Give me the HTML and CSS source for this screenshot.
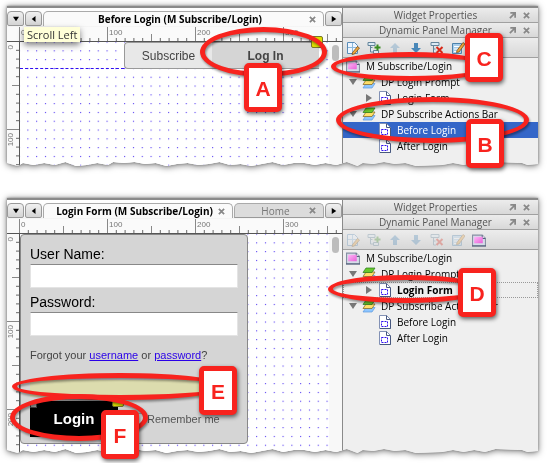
FILE: index.html
```html
<!DOCTYPE html>
<html lang="en">
<head>
    <meta charset="UTF-8">
    <meta name="viewport" content="width=device-width, initial-scale=1.0">
    <title>Dynamic Panel Manager</title>
    <link rel="stylesheet" href="styles.css">
</head>
<body>
    <!-- shared icons and patterns -->
    <svg class="defs" width="0" height="0" aria-hidden="true">
        <defs>
            <pattern id="dots" x="3.4" y="4.4" width="8.8" height="8.8" patternUnits="userSpaceOnUse">
                <rect x="4" y="4" width="1" height="1" fill="#3010f0"/>
            </pattern>
            <pattern id="ticks-x" x="12" y="0" width="88" height="14" patternUnits="userSpaceOnUse">
                <path d="M.5 0v14M44.5 7v7" stroke="#888"/>
                <path d="M9.3 11v3M18.1 11v3M26.9 11v3M35.7 11v3M53.3 11v3M62.1 11v3M70.9 11v3M79.7 11v3" stroke="#666"/>
            </pattern>
            <pattern id="ticks-y" x="0" y="-1" width="12" height="88" patternUnits="userSpaceOnUse">
                <path d="M0 .5h12M5 44.5h7" stroke="#888"/>
                <path d="M9 9.3h3M9 18.1h3M9 26.9h3M9 35.7h3M9 53.3h3M9 62.1h3M9 70.9h3M9 79.7h3" stroke="#666"/>
            </pattern>
            <linearGradient id="pink" x1="0" y1="0" x2="1" y2="1">
                <stop offset="0" stop-color="#ffb8f8"/>
                <stop offset="1" stop-color="#e860d8"/>
            </linearGradient>
            <symbol id="master" viewBox="0 0 13 12">
                <path d="M.5 1.5h9l3 3v7H.5z" fill="#d4dce8" stroke="#8790a4"/>
                <path d="M9.5 1.5v3h3" fill="#fff" stroke="#53617c"/>
                <rect x="2" y="3" width="8" height="6" fill="url(#pink)"/>
                <path d="M0 11.5h13" stroke="#4c5974"/>
            </symbol>
            <symbol id="layers" viewBox="0 0 14 14">
                <path d="M4 8.5h9l-3 4.500H1z" fill="#8ec6ff" stroke="#5c98dc" stroke-width=".7"/>
                <path d="M4 5h9l-3 4.500H1z" fill="#ffe06a" stroke="#806018" stroke-width=".7"/>
                <path d="M4 1h9l-3 4.500H1z" fill="#68c82c" stroke="#28781c" stroke-width=".7"/>
            </symbol>
            <symbol id="state" viewBox="0 0 12 14">
                <path d="M.5.5h7l4 4v9H.5z" fill="#fff" stroke="#8291b5"/>
                <path d="M7.500.5v4h4M11.500 5v8.500H1" fill="none" stroke="#47587f"/>
                <rect x="2.500" y="6.500" width="6" height="5" fill="none" stroke="#3010f0" stroke-dasharray="2 1"/>
            </symbol>
            <symbol id="page-edit" viewBox="0 0 14 14">
                <path d="M1.500 1.500h7l3 3v8h-10z" fill="#eef6ff" stroke="#5a8cb8"/>
                <path d="M2 6.500h9M6.500 2v10" stroke="#8cb8dc"/>
                <path d="M6.500 11.500l5-6 2 1.500-5 6-2.500.5z" fill="#eda63c" stroke="#704410" stroke-width=".7"/>
            </symbol>
            <symbol id="tree-add" viewBox="0 0 14 14">
                <path d="M1 1.500h7v3H1zM3.500 5v6H7M3.500 6.500h2" fill="#dcebf5" stroke="#63849b"/>
                <path d="M6.500 9.500h5v3h-5z" fill="#dcebf5" stroke="#63849b"/>
                <path d="M10.500 3.500v6M7.500 6.500h6" stroke="#388c20" stroke-width="2"/>
            </symbol>
            <symbol id="arrow-down" viewBox="0 0 12 14">
                <path d="M4 2h4v5h3L6 12 1 7h3z" fill="#4887b8"/>
            </symbol>
            <symbol id="arrow-up" viewBox="0 0 12 14">
                <path d="M4 12h4V7h3L6 2 1 7h3z" fill="#4887b8"/>
            </symbol>
            <symbol id="tree-delete" viewBox="0 0 14 14">
                <path d="M1 1.500h8v3H1zM3.500 5v7H6M3.500 8h2" fill="#dcebf5" stroke="#63849b"/>
                <path d="M6.500 6l6 6M12.500 6l-6 6" stroke="#d82818" stroke-width="2"/>
            </symbol>
            <symbol id="list-edit" viewBox="0 0 14 14">
                <path d="M1.500 2.500h9v10h-9z" fill="#a8cdea" stroke="#4c82ac"/>
                <path d="M3 5.500h6M3 8h4M3 10.500h3" stroke="#fff"/>
                <path d="M6 9.500l6-8 2 1.500-6 8-2.500.5z" fill="#eda63c" stroke="#704410" stroke-width=".7"/>
            </symbol>
            <symbol id="float" viewBox="0 0 8 8">
                <path d="M1.500 1h5.500v5.500M7 1L1 7" fill="none" stroke="#888" stroke-width="2"/>
            </symbol>
            <symbol id="close" viewBox="0 0 8 8">
                <path d="M1 1l6 6M7 1L1 7" stroke="#888" stroke-width="2"/>
            </symbol>
            <symbol id="tri-down" viewBox="0 0 8 8">
                <path d="M0 1h8L4 7z"/>
            </symbol>
            <symbol id="tri-right" viewBox="0 0 8 8">
                <path d="M1 0v8l6-4z"/>
            </symbol>
            <symbol id="tri-left" viewBox="0 0 8 8">
                <path d="M6 0v8L1 4z"/>
            </symbol>
        </defs>
    </svg>

    <!-- Subscribe / Log In bar -->
    <section class="shot">
        <div class="shot-shadow">
            <div class="window window-short">
                <div class="editor">
                    <div class="tabbar">
                        <button class="tab-nav" aria-label="Tab list"><svg class="tri"><use href="#tri-down"/></svg></button>
                        <button class="tab-nav" aria-label="Scroll Left"><svg class="tri"><use href="#tri-left"/></svg></button>
                        <div class="tab active">
                            <span class="tab-title">Before Login (M Subscribe/Login)</span>
                            <svg class="close"><use href="#close"/></svg>
                        </div>
                        <button class="tab-nav" aria-label="Scroll Right"><svg class="tri"><use href="#tri-right"/></svg></button>
                    </div>
                    <svg class="ruler-x">
                        <rect x="12" width="100%" height="14" fill="url(#ticks-x)"/>
                        <text x="14" y="8">0</text>
                        <text x="102" y="8">100</text>
                        <text x="190" y="8">200</text>
                        <text x="278" y="8">300</text>
                    </svg>
                    <div class="workspace">
                        <svg class="ruler-y">
                            <rect width="12" height="100%" fill="url(#ticks-y)"/>
                            <text transform="translate(6 3) rotate(-90)">0</text>
                            <text transform="translate(6 91) rotate(-90)">100</text>
                        </svg>
                        <div class="canvas">
                            <svg class="grid"><rect width="100%" height="100%" fill="url(#dots)"/></svg>
                            <div class="actions-bar">
                                <div class="guide"></div>
                                <button class="bar-button">Subscribe</button>
                                <button class="bar-button selected">Log In</button>
                                <span class="note bar-note"></span>
                            </div>
                        </div>
                        <div class="scrollbar"><div class="thumb"></div></div>
                    </div>
                </div>
                <div class="manager">
                    <div class="pane-title"><span>Widget Properties</span><svg class="close"><use href="#float"/></svg><svg class="close"><use href="#close"/></svg></div>
                    <div class="pane-title"><span>Dynamic Panel Manager</span><svg class="close"><use href="#float"/></svg><svg class="close"><use href="#close"/></svg></div>
                    <div class="toolbar">
                        <button class="tool" aria-label="Edit"><svg><use href="#page-edit"/></svg></button>
                        <button class="tool" aria-label="Add State"><svg><use href="#tree-add"/></svg></button>
                        <button class="tool" aria-label="Move Up" disabled><svg><use href="#arrow-up"/></svg></button>
                        <button class="tool" aria-label="Move Down"><svg><use href="#arrow-down"/></svg></button>
                        <button class="tool" aria-label="Delete"><svg><use href="#tree-delete"/></svg></button>
                        <button class="tool" aria-label="Edit All"><svg><use href="#list-edit"/></svg></button>
                        <button class="tool" aria-label="Master"><svg><use href="#master"/></svg></button>
                    </div>
                    <ul class="tree">
                        <li class="row root"><svg class="icon"><use href="#master"/></svg>M Subscribe/Login</li>
                        <li class="row panel"><svg class="toggle"><use href="#tri-down"/></svg><svg class="icon"><use href="#layers"/></svg>DP Login Prompt</li>
                        <li class="row state"><svg class="toggle"><use href="#tri-right"/></svg><svg class="icon"><use href="#state"/></svg>Login Form</li>
                        <li class="row panel"><svg class="toggle"><use href="#tri-down"/></svg><svg class="icon"><use href="#layers"/></svg>DP Subscribe Actions Bar</li>
                        <li class="row state current"><span class="toggle"></span><svg class="icon"><use href="#state"/></svg>Before Login</li>
                        <li class="row state"><span class="toggle"></span><svg class="icon"><use href="#state"/></svg>After Login</li>
                    </ul>
                </div>
            </div>
        </div>
        <div class="tooltip">Scroll Left</div>
        <div class="ring ring-a"></div>
        <div class="ring ring-b"></div>
        <div class="ring ring-c"></div>
        <div class="tag tag-a">A</div>
        <div class="tag tag-b">B</div>
        <div class="tag tag-c">C</div>
    </section>

    <!-- Login form -->
    <section class="shot">
        <div class="shot-shadow">
            <div class="window window-tall">
                <div class="editor">
                    <div class="tabbar">
                        <button class="tab-nav" aria-label="Tab list"><svg class="tri"><use href="#tri-down"/></svg></button>
                        <button class="tab-nav" aria-label="Scroll Left"><svg class="tri"><use href="#tri-left"/></svg></button>
                        <div class="tab active">
                            <span class="tab-title">Login Form (M Subscribe/Login)</span>
                            <svg class="close"><use href="#close"/></svg>
                        </div>
                        <div class="tab other">
                            <span class="tab-title">Home</span>
                            <svg class="close"><use href="#close"/></svg>
                        </div>
                        <button class="tab-nav" aria-label="Scroll Right"><svg class="tri"><use href="#tri-right"/></svg></button>
                    </div>
                    <svg class="ruler-x">
                        <rect x="12" width="100%" height="14" fill="url(#ticks-x)"/>
                        <text x="14" y="8">0</text>
                        <text x="102" y="8">100</text>
                        <text x="190" y="8">200</text>
                        <text x="278" y="8">300</text>
                    </svg>
                    <div class="workspace">
                        <svg class="ruler-y">
                            <rect width="12" height="100%" fill="url(#ticks-y)"/>
                            <text transform="translate(6 3) rotate(-90)">0</text>
                            <text transform="translate(6 91) rotate(-90)">100</text>
                            <text transform="translate(6 179) rotate(-90)">200</text>
                        </svg>
                        <div class="canvas">
                            <svg class="grid"><rect width="100%" height="100%" fill="url(#dots)"/></svg>
                            <form class="login-form">
                                <label for="username">User Name:</label>
                                <input type="text" id="username" class="field">
                                <label for="password">Password:</label>
                                <input type="password" id="password" class="field">
                                <p class="forgot">Forgot your <a href="#username">username</a> or <a href="#password">password</a>?</p>
                                <div class="message"></div>
                                <div class="submit-row">
                                    <button type="button" class="login-button">Login<span class="note login-note"></span><span class="mark"></span></button>
                                    <input type="checkbox" id="remember">
                                    <label for="remember" class="remember">Remember me</label>
                                </div>
                            </form>
                        </div>
                        <div class="scrollbar"><div class="thumb"></div></div>
                    </div>
                </div>
                <div class="manager">
                    <div class="pane-title"><span>Widget Properties</span><svg class="close"><use href="#float"/></svg><svg class="close"><use href="#close"/></svg></div>
                    <div class="pane-title"><span>Dynamic Panel Manager</span><svg class="close"><use href="#float"/></svg><svg class="close"><use href="#close"/></svg></div>
                    <div class="toolbar">
                        <button class="tool" aria-label="Edit" disabled><svg><use href="#page-edit"/></svg></button>
                        <button class="tool" aria-label="Add State" disabled><svg><use href="#tree-add"/></svg></button>
                        <button class="tool" aria-label="Move Up" disabled><svg><use href="#arrow-up"/></svg></button>
                        <button class="tool" aria-label="Move Down" disabled><svg><use href="#arrow-down"/></svg></button>
                        <button class="tool" aria-label="Delete" disabled><svg><use href="#tree-delete"/></svg></button>
                        <button class="tool" aria-label="Edit All" disabled><svg><use href="#list-edit"/></svg></button>
                        <button class="tool" aria-label="Master"><svg><use href="#master"/></svg></button>
                    </div>
                    <ul class="tree">
                        <li class="row root"><svg class="icon"><use href="#master"/></svg>M Subscribe/Login</li>
                        <li class="row panel"><svg class="toggle"><use href="#tri-down"/></svg><svg class="icon"><use href="#layers"/></svg>DP Login Prompt</li>
                        <li class="row state focused"><svg class="toggle"><use href="#tri-right"/></svg><svg class="icon"><use href="#state"/></svg>Login Form</li>
                        <li class="row panel"><svg class="toggle"><use href="#tri-down"/></svg><svg class="icon"><use href="#layers"/></svg>DP Subscribe Actions Bar</li>
                        <li class="row state"><span class="toggle"></span><svg class="icon"><use href="#state"/></svg>Before Login</li>
                        <li class="row state"><span class="toggle"></span><svg class="icon"><use href="#state"/></svg>After Login</li>
                    </ul>
                </div>
            </div>
        </div>
        <div class="ring ring-d"></div>
        <div class="ring ring-e"></div>
        <div class="ring ring-f"></div>
        <div class="tag tag-d">D</div>
        <div class="tag tag-e">E</div>
        <div class="tag tag-f">F</div>
    </section>
</body>
</html>
```

FILE: styles.css
```css
* {
    box-sizing: border-box;
}
body {
    margin: 0;
    padding: 6px 12px 10px 7px;
    background-color: #fff;
    font-family: "Open Sans", "Noto Sans", sans-serif;
    font-size: 10px;
    color: #000;
}
button {
    margin: 0;
    padding: 0;
    font: inherit;
}
svg {
    display: block;
    flex: none;
}
.defs {
    position: absolute;
}
.shot {
    position: relative;
    margin-bottom: 32px;
}
.shot:last-of-type {
    margin-bottom: 0;
}
.shot-shadow {
    filter: drop-shadow(0 0 1px #888) drop-shadow(0 1px 3px rgba(0, 0, 0, 0.5));
}
/* window with a torn bottom edge */
.window {
    display: flex;
    background-color: #efefef;
    border-top: 2px solid #8a8a8a;
    clip-path: polygon(0 0, 100% 0, 100% calc(100% - 2px), 98% calc(100% - 1px), 97% calc(100% - 3px), 92% calc(100% - 4px), 90% calc(100% - 1px), 88% calc(100% - 3px), 86% calc(100% - 1px), 84% calc(100% - 3px), 82% calc(100% - 1px), 77% 100%, 75% calc(100% - 3px), 73% calc(100% - 2px), 71% calc(100% - 4px), 69% calc(100% - 2px), 67% calc(100% - 3px), 66% 100%, 64% calc(100% - 4px), 62% calc(100% - 1px), 60% calc(100% - 3px), 58% calc(100% - 1px), 56% calc(100% - 3px), 54% calc(100% - 3px), 52% calc(100% - 1px), 50% calc(100% - 4px), 48% calc(100% - 2px), 46% 100%, 44% calc(100% - 2px), 42% calc(100% - 1px), 40% calc(100% - 4px), 38% calc(100% - 2px), 36% calc(100% - 1px), 34% calc(100% - 3px), 32% calc(100% - 2px), 30% 100%, 28% calc(100% - 3px), 26% calc(100% - 2px), 24% calc(100% - 4px), 22% calc(100% - 3px), 20% calc(100% - 4px), 19% calc(100% - 1px), 17% calc(100% - 3px), 15% calc(100% - 1px), 13% 100%, 11% calc(100% - 4px), 9% calc(100% - 1px), 7% calc(100% - 3px), 5% calc(100% - 1px), 3% calc(100% - 3px), 2% 100%, 0 calc(100% - 3px));
}
.window-short {
    height: 160px;
}
.window-tall {
    height: 255px;
}
.editor {
    flex: 1;
    min-width: 0;
    display: flex;
    flex-direction: column;
    background-color: #fafafa;
}
/* tabs */
.tabbar {
    display: flex;
    gap: 1px;
    height: 19px;
    padding-top: 3px;
    background: linear-gradient(#fff, #f4f4f4);
}
.tab-nav {
    display: flex;
    align-items: center;
    justify-content: center;
    width: 17px;
    height: 15px;
    background: linear-gradient(#f0f0f0, #d4d4d4);
    border: 1px solid #999;
    border-radius: 4px 4px 2px 2px;
}
.tri {
    width: 6px;
    height: 6px;
}
.tab {
    display: flex;
    align-items: center;
    height: 15px;
    padding: 0 7px;
    border: 1px solid #aaa;
    border-bottom: 0;
    border-radius: 5px 5px 0 0;
}
.tab.active {
    flex: 1;
    background-color: #fafafa;
    font-weight: bold;
    color: #000;
}
.tab.other {
    width: 90px;
    background-color: #dcdcdc;
    border-bottom: 1px solid #999;
    color: #777;
}
.tab-title {
    flex: 1;
    text-align: center;
    line-height: 14px;
    white-space: nowrap;
}
.close {
    width: 7px;
    height: 7px;
}
/* rulers */
.ruler-x {
    width: 100%;
    height: 15px;
    border-bottom: 1px solid #555;
}
.ruler-y {
    width: 13px;
    height: 100%;
    border-right: 1px solid #555;
}
.ruler-x text,
.ruler-y text {
    font-family: "Liberation Sans", Arial, sans-serif;
    font-size: 8px;
    fill: #777;
}
.ruler-y text {
    text-anchor: end;
}
/* canvas */
.workspace {
    flex: 1;
    display: flex;
    min-height: 0;
}
.canvas {
    position: relative;
    flex: 1;
    min-width: 0;
    background-color: #fff;
    font-family: "Liberation Sans", Arial, sans-serif;
}
.grid {
    position: absolute;
    width: 100%;
    height: 100%;
}
.scrollbar {
    width: 13px;
    padding: 3px;
    background-color: #f8f8f8;
}
.thumb {
    height: 16px;
    background-color: #bdbdbd;
    border-radius: 4px;
}
.actions-bar {
    position: relative;
    display: flex;
    width: 299px;
    height: 27px;
}
.guide {
    width: 104px;
    border-bottom: 1px dashed #3010f0;
}
.bar-button {
    flex: 1;
    background-color: #e8e8e8;
    border: 1px solid #999;
    border-right: 0;
    border-radius: 4px 0 0 4px;
    font-size: 12px;
    color: #444;
}
.bar-button.selected {
    flex: none;
    width: 107px;
    background-color: #d5d5d5;
    border-left: 0;
    border-radius: 0;
    font-weight: bold;
}
.note {
    position: absolute;
    width: 12px;
    height: 12px;
    background-color: #dede00;
    border: 1px solid #77772a;
    border-radius: 2px;
}
.bar-note {
    top: -6px;
    right: -4px;
}
/* login form */
.login-form {
    position: relative;
    display: flex;
    flex-direction: column;
    width: 228px;
    padding: 9px 9px 6px;
    background-color: #d5d5d5;
    border: 1px solid #888;
    border-radius: 4px;
    font-size: 14px;
    line-height: 20px;
}
.field {
    width: 100%;
    height: 24px;
    margin-bottom: 4px;
    padding: 0 4px;
    background-color: #fff;
    border: 1px solid #e4e4e4;
    border-top-color: #888;
}
.forgot {
    margin: 6px 0 16px;
    font-size: 11px;
    line-height: 18px;
    color: #444;
}
.forgot a {
    color: #2a00e8;
}
.message {
    height: 17px;
    margin-bottom: 4px;
    background-color: #dcdcae;
}
.submit-row {
    display: flex;
    align-items: center;
    height: 36px;
}
.login-button {
    position: relative;
    width: 88px;
    height: 36px;
    background-color: #000;
    border: 0;
    color: #fff;
    font-size: 15px;
    font-weight: bold;
}
.login-note {
    top: -6px;
    right: -6px;
}
.mark {
    position: absolute;
    top: 0;
    left: 0;
    width: 7px;
    height: 7px;
    background-color: #aaa;
    border: 1px solid #444;
}
#remember {
    appearance: none;
    width: 12px;
    height: 12px;
    margin: 0 3px 0 14px;
    background-color: #e4e4e4;
    border: 1px solid #aaa;
    border-radius: 2px;
}
.remember {
    font-size: 11px;
    color: #555;
}
/* dynamic panel manager */
.manager {
    width: 196px;
    border-left: 1px solid #8a8a8a;
    background-color: #efefef;
}
.pane-title {
    display: flex;
    align-items: center;
    gap: 7px;
    height: 15px;
    padding-right: 8px;
    background: linear-gradient(#ececec, #d8d8d8);
    border-bottom: 1px solid #a0a0a0;
    color: #555;
}
.pane-title span {
    flex: 1;
    padding-left: 26px;
    text-align: center;
    line-height: 14px;
}
.toolbar {
    display: flex;
    align-items: center;
    gap: 7px;
    height: 20px;
    padding-left: 3px;
    background: linear-gradient(#ececec, #d8d8d8);
    border-bottom: 1px solid #a0a0a0;
}
.tool {
    width: 14px;
    height: 14px;
    background: none;
    border: 0;
}
.tool svg {
    width: 14px;
    height: 14px;
}
.tool:disabled {
    opacity: 0.3;
}
.tree {
    margin: 0;
    padding: 0;
    list-style: none;
}
.row {
    display: flex;
    align-items: center;
    height: 16px;
    line-height: 16px;
    white-space: nowrap;
}
.icon {
    width: 14px;
    height: 14px;
}
.toggle {
    width: 8px;
    height: 8px;
    fill: #777;
}
.row.root {
    gap: 6px;
    padding-left: 3px;
}
.row.panel {
    gap: 5px;
    padding-left: 6px;
}
.row.state {
    gap: 5px;
    padding-left: 22px;
}
.row.current {
    background-color: #3466c8;
    color: #fff;
}
.row.focused {
    outline: 1px dotted #999;
    outline-offset: -1px;
    font-weight: bold;
}
.tooltip {
    position: absolute;
    top: 21px;
    left: 17px;
    padding: 0 3px;
    background-color: #ffffd8;
    box-shadow: 0 3px 6px rgba(0, 0, 0, 0.5);
    font-size: 11px;
    line-height: 15px;
    color: #333;
}
/* callouts */
.ring {
    position: absolute;
    border: 5px solid #f8231e;
    border-radius: 50%;
    filter: drop-shadow(1px 2px 1px rgba(0, 0, 0, 0.4));
}
.ring-a {
    top: 21px;
    left: 193px;
    width: 127px;
    height: 50px;
}
.ring-b {
    top: 91px;
    right: 9px;
    width: 193px;
    height: 46px;
}
.ring-c {
    top: 46px;
    right: 48px;
    width: 159px;
    height: 29px;
}
.ring-d {
    top: 77px;
    right: 54px;
    width: 156px;
    height: 28px;
}
.ring-e {
    top: 175px;
    left: 5px;
    width: 216px;
    height: 27px;
}
.ring-f {
    top: 196px;
    left: 3px;
    width: 138px;
    height: 47px;
}
.tag {
    position: absolute;
    width: 38px;
    height: 49px;
    background-color: #fff;
    border: 5px solid #f8231e;
    border-radius: 5px;
    box-shadow: 1px 2px 4px rgba(0, 0, 0, 0.6);
    font-family: "Liberation Sans", Arial, sans-serif;
    font-size: 21px;
    font-weight: bold;
    line-height: 41px;
    text-align: center;
    color: #f8231e;
}
.tag-a {
    top: 57px;
    left: 237px;
}
.tag-b {
    top: 113px;
    right: 34px;
}
.tag-c {
    top: 27px;
    right: 35px;
}
.tag-d {
    top: 70px;
    right: 42px;
}
.tag-e {
    top: 168px;
    left: 192px;
}
.tag-f {
    top: 212px;
    left: 94px;
}
```
